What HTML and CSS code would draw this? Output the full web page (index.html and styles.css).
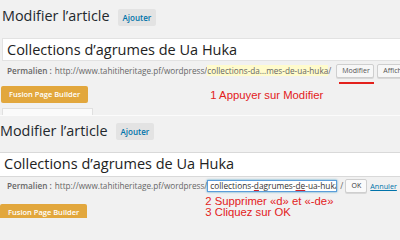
FILE: index.html
```html
<!DOCTYPE html>
<html lang="fr">
<head>
<meta charset="utf-8">
<title>Modifier l’article</title>
<link rel="stylesheet" href="styles.css">
</head>
<body>
<div class="page">
  <section class="shot shot-one">
    <div class="head">
      <h1 class="title">Modifier l’article</h1>
      <span class="add-btn">Ajouter</span>
    </div>
    <div class="title-field">Collections d’agrumes de Ua Huka</div>
    <div class="perma">
      <span class="perma-label">Permalien :</span>
      <span class="perma-url">http://www.tahitiheritage.pf/wordpress/<span class="slug">collections-da…mes-de-ua-huka</span>/</span>
      <span class="small-btn edit-btn">Modifier</span>
      <span class="small-btn">Afficher l’article</span>
    </div>
    <div class="action-row">
      <span class="fusion-btn">Fusion Page Builder</span>
      <span class="note note-one">1 Appuyer sur Modifier</span>
    </div>
    <div class="box-frag"></div>
  </section>
  <section class="shot shot-two">
    <div class="head head-two">
      <h1 class="title">Modifier l’article</h1>
      <span class="add-btn">Ajouter</span>
    </div>
    <div class="title-field title-field-two">Collections d’agrumes de Ua Huka</div>
    <div class="perma perma-two">
      <span class="perma-label">Permalien :</span>
      <span class="perma-url">http://www.tahitiheritage.pf/wordpress/</span>
      <span class="slug-input">collections-<span class="spell">d</span>agrumes-<span class="spell">de</span>-ua-huka</span>
      <span class="sep">/</span>
      <span class="small-btn ok-btn">OK</span>
      <span class="cancel">Annuler</span>
    </div>
    <div class="action-row action-row-two">
      <span class="fusion-btn fusion-two">Fusion Page Builder</span>
      <div class="note note-two">
        <div>2 Supprimer «d» et «-de»</div>
        <div>3 Cliquez sur OK</div>
      </div>
    </div>
  </section>
</div>
</body>
</html>
```
FILE: styles.css
```css
html, body {
  margin: 0;
  padding: 0;
  background: #f1f1f1;
}
.page {
  width: 400px;
  height: 218px;
  overflow: hidden;
  font-family: "Open Sans", "Noto Sans", sans-serif;
  color: #23282d;
}
.shot {
  overflow: hidden;
}
.shot-one {
  height: 115px;
}
.shot-two {
  height: 102px;
  border-top: 1px solid #fbfbfb;
}
.head {
  display: flex;
  align-items: flex-start;
  gap: 8px;
  padding: 7px 0 0 2px;
}
.head-two {
  padding: 6px 0 0 0;
}
.title {
  margin: 0;
  font-size: 14.4px;
  font-weight: 400;
  line-height: 18px;
  white-space: nowrap;
}
.add-btn {
  margin-top: 2px;
  height: 17px;
  line-height: 17px;
  padding: 0 5px;
  background: #e3e3e3;
  border-radius: 2px;
  color: #0073aa;
  font-size: 8px;
  font-weight: 600;
}
.head-two .add-btn {
  margin-top: 1px;
}
.title-field {
  margin: 12px 0 0 2px;
  height: 21px;
  line-height: 21px;
  padding-left: 4px;
  background: #fff;
  border: 1px solid #e2e2e2;
  border-right: none;
  font-size: 14.5px;
  color: #222;
  white-space: nowrap;
  overflow: hidden;
}
.title-field-two {
  margin: 12px 0 0 0;
  height: 23px;
  line-height: 22px;
  padding-left: 4px;
  border-left: none;
  border-color: #d9d9d9;
}
.perma {
  display: flex;
  align-items: center;
  height: 14px;
  margin-top: 3px;
  padding-left: 7px;
  font-size: 8.2px;
  line-height: 14px;
  color: #666;
  white-space: nowrap;
}
.perma-two {
  margin-top: 2px;
}
.perma-label {
  font-weight: 600;
  margin-right: 3px;
}
.slug {
  background: #fffbcc;
}
.small-btn {
  position: relative;
  flex: none;
  height: 12px;
  line-height: 12px;
  padding: 0 5px;
  margin-left: 3px;
  background: #f7f7f7;
  border: 1px solid #cfcfcf;
  border-radius: 2px;
  box-shadow: 0 1px 0 #d8d8d8;
  font-size: 7px;
  color: #555;
}
.edit-btn {
  width: 26px;
  margin-left: 5px;
  text-align: center;
}
.edit-btn::after {
  content: "";
  position: absolute;
  left: 2px;
  right: -1px;
  top: calc(100% + 5px);
  height: 1.5px;
  background: #e3211c;
}
.slug-input {
  flex: none;
  width: 124px;
  height: 10px;
  line-height: 10px;
  padding: 0 2px;
  background: #fff;
  border: 1px solid #5b9dd9;
  box-shadow: 0 0 2px rgba(30, 140, 190, 0.8);
  font-size: 8.3px;
  color: #333;
  overflow: hidden;
}
.spell {
  text-decoration: underline;
  text-decoration-color: #d0202a;
  text-decoration-thickness: 1.5px;
  text-underline-offset: 1px;
}
.sep {
  margin-left: 3px;
}
.ok-btn {
  width: 10px;
  height: 12px;
  line-height: 12px;
  margin-left: 2px;
  text-align: center;
  color: #333;
  background: #fafafa;
}
.cancel {
  margin-left: 3px;
  color: #0073aa;
  text-decoration: underline;
  font-size: 7.2px;
}
.action-row {
  display: flex;
  align-items: flex-start;
  margin-top: 8px;
}
.action-row-two {
  margin-top: 0;
}
.fusion-btn {
  flex: none;
  height: 17px;
  line-height: 17px;
  padding: 0 8px;
  margin-left: 1px;
  background: #e2a73d;
  border-radius: 2px;
  color: #fff;
  font-size: 7.5px;
  font-weight: 600;
}
.fusion-two {
  margin-top: 11px;
  margin-left: 0;
}
.note {
  font-family: "Liberation Sans", Arial, sans-serif;
  color: #e3211c;
  font-size: 11.3px;
  white-space: nowrap;
}
.note-one {
  margin-left: 122px;
  margin-top: 3px;
  line-height: 13px;
}
.note-two {
  margin-left: 118px;
  margin-top: 3px;
  line-height: 11px;
}
.box-frag {
  width: 89px;
  height: 8px;
  margin: 5px 0 0 2px;
  background: #fafafa;
  border: 1px solid #e0e0e0;
  border-bottom: none;
}
```
